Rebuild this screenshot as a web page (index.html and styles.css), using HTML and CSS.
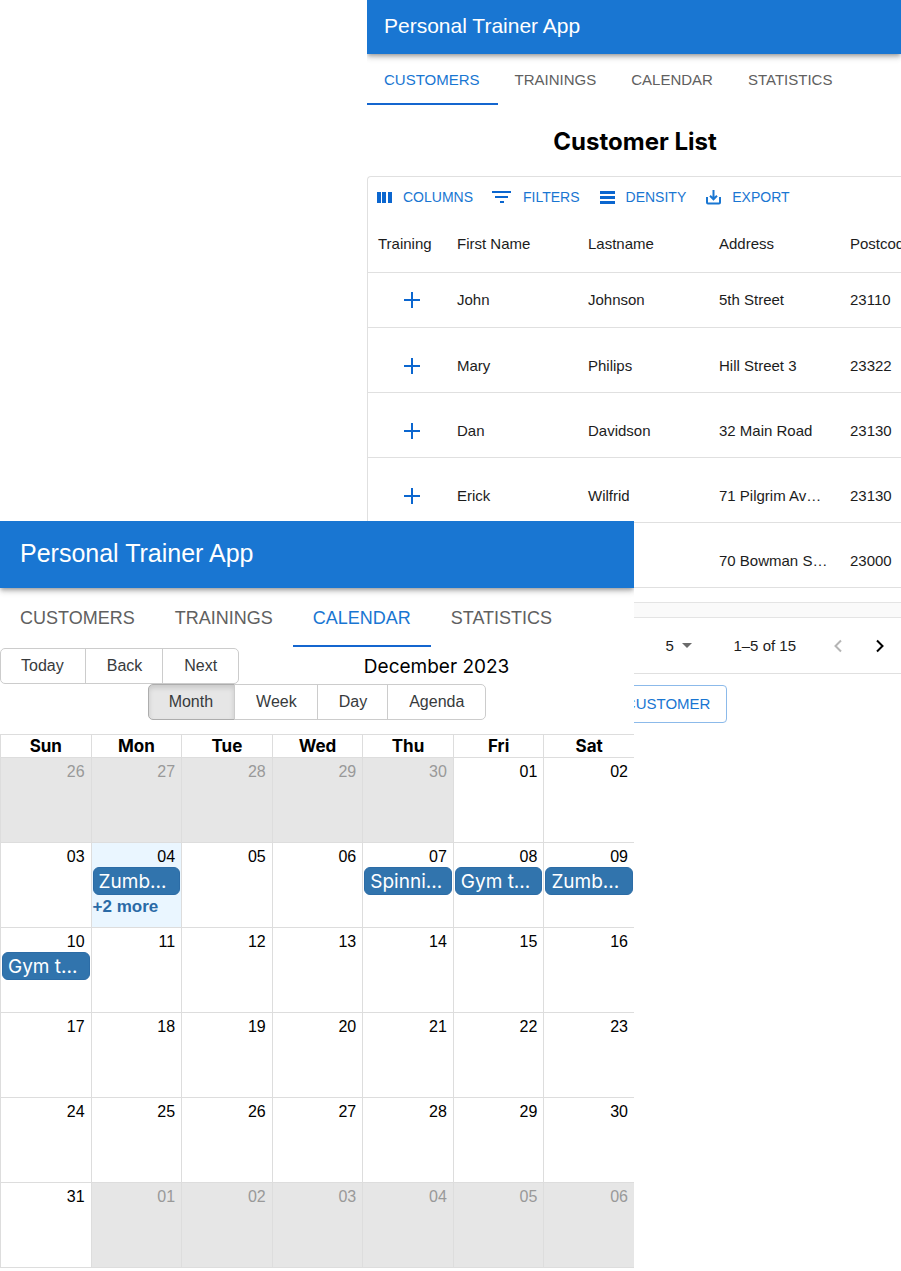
FILE: index.html
```html
<!DOCTYPE html>
<html lang="en">
<head>
<meta charset="utf-8">
<title>Personal Trainer App</title>
<link rel="stylesheet" href="styles.css">
</head>
<body>
<main class="stage">
  <section class="screen customers">
    <header class="appbar">Personal Trainer App</header>
    <nav class="tabs">
      <a class="tab active" href="#customers">CUSTOMERS</a>
      <a class="tab" href="#trainings">TRAININGS</a>
      <a class="tab" href="#calendar">CALENDAR</a>
      <a class="tab" href="#statistics">STATISTICS</a>
    </nav>
    <h1 class="heading">Customer List</h1>
    <div class="grid-box">
      <div class="grid-tools">
        <button class="tool"><svg width="22" height="20" viewBox="0 0 22 20"><path d="M5 5h4v11H5zM10 5h4v11h-4zM16 5h4v11h-4z"/></svg>COLUMNS</button>
        <button class="tool"><svg width="26" height="20" viewBox="0 0 26 20"><path d="M4 4h19v2H4zM7 9h13v2H7zM12 14h4v2h-4z"/></svg>FILTERS</button>
        <button class="tool"><svg width="22" height="20" viewBox="0 0 22 20"><path d="M5 4h15v3H5zM5 9h15v3H5zM5 14h15v3H5z"/></svg>DENSITY</button>
        <button class="tool"><svg width="22" height="20" viewBox="0 0 22 20"><path class="line" d="M6 10v5.500q0 1 1 1h11q1 0 1-1V10M12.500 3v9M9 8.800l3.500 3.500L16 8.800"/></svg>EXPORT</button>
      </div>
      <table class="grid">
        <colgroup><col class="col-add"><col><col><col><col></colgroup>
        <thead><tr><th>Training</th><th>First Name</th><th>Lastname</th><th>Address</th><th>Postcode</th></tr></thead>
        <tbody>
          <tr><td class="add"><button aria-label="Add training"><svg width="16" height="16" viewBox="0 0 16 16"><path d="M7 0h2v7h7v2H9v7H7V9H0V7h7z"/></svg></button></td><td>John</td><td>Johnson</td><td>5th Street</td><td>23110</td></tr>
          <tr><td class="add"><button aria-label="Add training"><svg width="16" height="16" viewBox="0 0 16 16"><path d="M7 0h2v7h7v2H9v7H7V9H0V7h7z"/></svg></button></td><td>Mary</td><td>Philips</td><td>Hill Street 3</td><td>23322</td></tr>
          <tr><td class="add"><button aria-label="Add training"><svg width="16" height="16" viewBox="0 0 16 16"><path d="M7 0h2v7h7v2H9v7H7V9H0V7h7z"/></svg></button></td><td>Dan</td><td>Davidson</td><td>32 Main Road</td><td>23130</td></tr>
          <tr><td class="add"><button aria-label="Add training"><svg width="16" height="16" viewBox="0 0 16 16"><path d="M7 0h2v7h7v2H9v7H7V9H0V7h7z"/></svg></button></td><td>Erick</td><td>Wilfrid</td><td>71 Pilgrim Av…</td><td>23130</td></tr>
          <tr><td></td><td></td><td></td><td>70 Bowman S…</td><td>23000</td></tr>
        </tbody>
      </table>
      <div class="scroll-track"></div>
      <div class="pager">
        <span class="page-size"><select aria-label="Rows per page"><option>5</option></select><svg width="10" height="5" viewBox="0 0 10 5"><path d="M0 0h10L5 5z"/></svg></span>
        <span class="range">1–5 of 15</span>
        <button class="prev" aria-label="Previous page" disabled><svg width="10" height="14" viewBox="0 0 10 14"><path d="M8 1.500L2.500 7 8 12.500"/></svg></button>
        <button class="next" aria-label="Next page"><svg width="10" height="14" viewBox="0 0 10 14"><path d="M2 1.500L7.500 7 2 12.500"/></svg></button>
      </div>
    </div>
    <button class="add-customer">ADD CUSTOMER</button>
  </section>

  <section class="screen calendar">
    <header class="appbar">Personal Trainer App</header>
    <nav class="tabs">
      <a class="tab" href="#customers">CUSTOMERS</a>
      <a class="tab" href="#trainings">TRAININGS</a>
      <a class="tab active" href="#calendar">CALENDAR</a>
      <a class="tab" href="#statistics">STATISTICS</a>
    </nav>
    <div class="cal-tools">
      <div class="group"><button>Today</button><button>Back</button><button>Next</button></div>
      <div class="month-label">December 2023</div>
      <div class="group"><button class="pressed">Month</button><button>Week</button><button>Day</button><button>Agenda</button></div>
    </div>
    <table class="month">
      <thead><tr><th>Sun</th><th>Mon</th><th>Tue</th><th>Wed</th><th>Thu</th><th>Fri</th><th>Sat</th></tr></thead>
      <tbody>
        <tr><td class="off"><span>26</span></td><td class="off"><span>27</span></td><td class="off"><span>28</span></td><td class="off"><span>29</span></td><td class="off"><span>30</span></td><td><span>01</span></td><td><span>02</span></td></tr>
        <tr><td><span>03</span></td><td class="today"><span>04</span><button class="event">Zumb...</button><button class="more">+2 more</button></td><td><span>05</span></td><td><span>06</span></td><td><span>07</span><button class="event">Spinni...</button></td><td><span>08</span><button class="event">Gym t...</button></td><td><span>09</span><button class="event">Zumb...</button></td></tr>
        <tr><td><span>10</span><button class="event">Gym t...</button></td><td><span>11</span></td><td><span>12</span></td><td><span>13</span></td><td><span>14</span></td><td><span>15</span></td><td><span>16</span></td></tr>
        <tr><td><span>17</span></td><td><span>18</span></td><td><span>19</span></td><td><span>20</span></td><td><span>21</span></td><td><span>22</span></td><td><span>23</span></td></tr>
        <tr><td><span>24</span></td><td><span>25</span></td><td><span>26</span></td><td><span>27</span></td><td><span>28</span></td><td><span>29</span></td><td><span>30</span></td></tr>
        <tr><td><span>31</span></td><td class="off"><span>01</span></td><td class="off"><span>02</span></td><td class="off"><span>03</span></td><td class="off"><span>04</span></td><td class="off"><span>05</span></td><td class="off"><span>06</span></td></tr>
      </tbody>
    </table>
  </section>
</main>
</body>
</html>
```
FILE: styles.css
```css
* { box-sizing: border-box; }
body {
  margin: 0;
  background: #fff;
  color: #1c1c1c;
  font: 15px/20px "Liberation Sans", Arial, sans-serif;
}
button, select {
  margin: 0;
  padding: 0;
  border: 0;
  background: none;
  color: inherit;
  font: inherit;
}

/* Two screens share the grid; the calendar overlaps the lower left of the customer list. */
.stage {
  display: grid;
  grid-template-columns: 367fr 267fr 267fr;
  grid-template-rows: 521px auto;
}
.screen { min-width: 0; overflow: hidden; background: #fff; }
.customers { grid-area: 1 / 2 / 3 / 4; }
.calendar { grid-area: 2 / 1 / 3 / 3; z-index: 1; align-self: start; }

.appbar {
  background: #1976d2;
  color: #fff;
  box-shadow: 0 2px 4px -1px rgba(0,0,0,.3), 0 4px 5px rgba(0,0,0,.12), 0 1px 10px rgba(0,0,0,.1);
}
.customers .appbar { padding: 11px 17px 13px; font-size: 21px; line-height: 30px; }
.calendar .appbar { padding: 16px 20px 19px; font-size: 25px; line-height: 32px; }

.tabs { display: flex; }
.tab { color: #606060; text-decoration: none; border-bottom: 2px solid transparent; }
.tab.active { color: #1976d2; border-color: #1466cf; }
.customers .tab { padding: 16px 18px 13px 17px; }
.calendar .tab { padding: 20px 20px 17px; font-size: 18px; }

.heading {
  margin: 0;
  padding: 22px 0 19px 2px;
  color: #000;
  font: bold 24px/30px Inter, sans-serif;
  text-align: center;
}

.grid-box {
  overflow: hidden;
  border: 1px solid #e0e0e0;
  border-right: 0;
  border-radius: 4px 0 0 4px;
}
.grid-tools { display: flex; gap: 15px; padding: 10px 4px 8px; }
.tool {
  display: flex;
  align-items: center;
  gap: 9px;
  color: #1976d2;
  font-size: 14px;
}
.tool svg { fill: #0b66cf; }
.tool .line { fill: none; stroke: #1976d2; stroke-width: 2; }

.grid { width: 603px; table-layout: fixed; border-collapse: separate; border-spacing: 0; }
.col-add { width: 79px; }
.grid th, .grid td {
  padding: 11px 0 0 10px;
  height: 65px;
  border-bottom: 1px solid #e0e0e0;
  font-weight: normal;
  text-align: left;
  white-space: nowrap;
}
.grid th { height: 58px; padding-top: 0; }
.grid tbody tr:first-child td { height: 55px; padding-top: 0; }
.grid .add svg { display: block; fill: #0b66cf; }
.grid .add button { display: block; margin-left: 26px; }

.scroll-track {
  height: 16px;
  margin-top: 14px;
  border: solid #e4e4e4;
  border-width: 1px 0;
  background: #fafafa;
}
.pager { display: flex; align-items: center; justify-content: flex-end; height: 55px; padding-right: 16px; }
.page-size { display: flex; align-items: center; gap: 8px; }
.page-size select { appearance: none; width: 9px; }
.page-size svg { fill: #6b6b6b; }
.range { margin: 0 37px 0 41px; }
.pager button { display: flex; }
.pager button svg { fill: none; stroke: #000; stroke-width: 2; }
.pager .prev { margin-right: 32px; }
.pager .prev svg { stroke: #b5b5b5; }

.add-customer {
  display: block;
  margin: 11px 0 0 205px;
  padding: 8px 16px;
  border: 1px solid #8cbaea;
  border-radius: 4px;
  color: #1976d2;
}

.cal-tools {
  display: flex;
  flex-wrap: wrap;
  justify-content: center;
  align-items: center;
  padding-top: 1px;
  margin-bottom: 14px;
}
.group { display: flex; font-size: 16px; color: #373a3c; }
.group button {
  padding: 7px 20px;
  border: 1px solid #ccc;
  line-height: 20px;
}
.group button + button { margin-left: -1px; padding-left: 21px; }
.group button:first-child { border-radius: 5px 0 0 5px; padding-right: 21px; }
.group button:last-child { border-radius: 0 5px 5px 0; padding-right: 21px; }
.group .pressed {
  border-color: #adadad;
  background: #e6e6e6;
  box-shadow: inset 0 3px 5px rgba(0,0,0,.125);
}
.month-label {
  flex: 1;
  padding-top: 2px;
  color: #000;
  font: 19px/24px Inter, sans-serif;
  text-align: center;
}

.month { width: 100%; table-layout: fixed; border-collapse: separate; border-spacing: 0; border-bottom: 1px solid #ddd; }
.month th, .month td { border-left: 1px solid #ddd; border-top: 1px solid #ddd; padding: 0; }
.month th { color: #000; font: bold 17px/22px Inter, sans-serif; }
.month td {
  height: 85px;
  padding: 4px 1px 0;
  color: #000;
  font-size: 16px;
  text-align: right;
  vertical-align: top;
}
.month td span { display: block; padding-right: 5px; }
.month .off { background: #e6e6e6; color: #999; }
.month .today { background: #eaf6ff; }
.event, .more { display: block; text-align: left; white-space: nowrap; }
.event {
  width: 100%;
  padding: 1px 5px 0;
  border: 1px solid #2c6ca6;
  border-radius: 6px;
  background: #3174ad;
  color: #fff;
  font: 19px/25px Inter, sans-serif;
}
.more { margin-top: 2px; color: #2a6aa6; font-size: 17px; font-weight: bold; }
```
